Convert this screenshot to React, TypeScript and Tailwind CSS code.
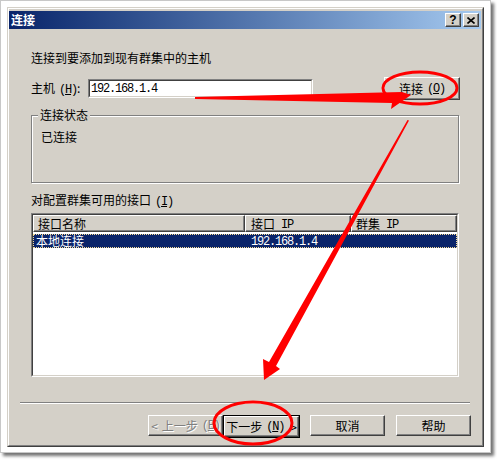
import React from 'react';

const cjk = "font-['Noto_Sans_CJK_SC',sans-serif]";

const M: React.FC<{ children: React.ReactNode; u?: boolean }> = ({ children, u }) => (
  <span className={`font-['Liberation_Mono',monospace] tracking-[-1.2px] ${u ? 'underline underline-offset-1' : ''}`}>
    {children}
  </span>
);

const Key: React.FC<{ k: string }> = ({ k }) => (
  <span className="font-['Liberation_Mono',monospace] tracking-[-1.2px] ml-[4px]">
    (<span className="underline underline-offset-1">{k}</span>)
  </span>
);

const raised =
  'border border-t-white border-l-white border-r-[#404040] border-b-[#404040] shadow-[inset_-1px_-1px_0_#808080]';

const Button: React.FC<{ children: React.ReactNode; className?: string; disabled?: boolean }> = ({
  children,
  className = '',
  disabled,
}) => (
  <div
    className={`h-[21px] w-[75px] flex items-center justify-center bg-[#d4d0c8] ${raised} ${
      disabled ? 'text-[#808080] [text-shadow:1px_1px_0_#fff]' : 'text-black'
    } ${className}`}
  >
    {children}
  </div>
);

const HeaderCell: React.FC<{ w: string; pl: string; children: React.ReactNode }> = ({ w, pl, children }) => (
  <div className={`${w} ${pl} h-[17px] flex items-center bg-[#d4d0c8] ${raised}`}>{children}</div>
);

export default function App() {
  return (
    <div className={`relative w-[497px] h-[460px] bg-white ${cjk} text-[12px] leading-[12px] text-black`}>
      {/* screenshot frame */}
      <div className="w-[491px] h-[453px] bg-white border border-[#c8c8c8] shadow-[3px_3px_3px_rgba(0,0,0,0.55)] p-[6px]">
        {/* dialog */}
        <div className="w-[477px] h-[440px] bg-[#d4d0c8] border border-t-[#d4d0c8] border-l-[#d4d0c8] border-r-[#404040] border-b-[#404040]">
          <div className="h-full border border-t-white border-l-white border-r-[#808080] border-b-[#808080] pt-[2px] pr-[1px]">
            {/* title bar */}
            <div className="h-[18px] flex items-center justify-between bg-gradient-to-r from-[#0a246a] to-[#a6caf0] pl-[2px] pr-[2px]">
              <span className="text-white font-bold text-[12px]">连接</span>
              <div className="flex gap-[2px]">
                <div className={`w-[16px] h-[14px] bg-[#d4d0c8] ${raised} flex items-center justify-center font-['Liberation_Sans',sans-serif] font-bold text-[12px] leading-none`}>
                  ?
                </div>
                <div className={`w-[16px] h-[14px] bg-[#d4d0c8] ${raised} flex items-center justify-center`}>
                  <svg width="8" height="7" viewBox="0 0 8 7">
                    <path d="M0.5 0.5 L7.5 6.5 M7.5 0.5 L0.5 6.5" stroke="#000" strokeWidth="1.6" />
                  </svg>
                </div>
              </div>
            </div>

            {/* body */}
            <div className="pl-[22px]">
              <div className="mt-[23px] h-[12px]">连接到要添加到现有群集中的主机</div>

              <div className="mt-[13px] h-[23px] flex items-center">
                <div className="w-[57px]">
                  主机<Key k="H" />:
                </div>
                <div className="w-[225px] h-[19px] bg-white border border-t-[#808080] border-l-[#808080] border-r-white border-b-white">
                  <div className="h-full border border-t-[#404040] border-l-[#404040] border-r-[#d4d0c8] border-b-[#d4d0c8] flex items-center pl-[1px]">
                    <M>192.168.1.4</M>
                  </div>
                </div>
                <Button className="ml-[71px] h-[23px] w-[76px]">
                  连接<Key k="O" />
                </Button>
              </div>

              {/* group box */}
              <div className="relative mt-[15px] w-[428px] h-[68px] border border-[#808080] shadow-[inset_1px_1px_0_#fff,1px_1px_0_#fff] pl-[9px] pt-[15px]">
                <span className="absolute -top-[7px] left-[6px] bg-[#d4d0c8] px-[2px]">连接状态</span>
                <div>已连接</div>
              </div>

              <div className="mt-[11px] h-[12px]">
                对配置群集可用的接口<Key k="I" />
              </div>

              {/* list view */}
              <div className="mt-[7px] w-[428px] h-[164px] bg-white border border-t-[#808080] border-l-[#808080] border-r-white border-b-white">
                <div className="h-full border border-t-[#404040] border-l-[#404040] border-r-[#d4d0c8] border-b-[#d4d0c8]">
                  <div className="flex">
                    <HeaderCell w="w-[212px]" pl="pl-[4px]">接口名称</HeaderCell>
                    <HeaderCell w="w-[106px]" pl="pl-[5px]">
                      接口<span className="ml-[6px]"><M>IP</M></span>
                    </HeaderCell>
                    <HeaderCell w="w-[106px]" pl="pl-[4px]">
                      群集<span className="ml-[6px]"><M>IP</M></span>
                    </HeaderCell>
                  </div>
                  <div className="mt-[2px] h-[14px] flex items-center bg-[#0a246a] text-white border border-dotted border-[#f5db95]">
                    <div className="w-[211px] pl-[2px]">本地连接</div>
                    <div className="pl-[6px]">
                      <M>192.168.1.4</M>
                    </div>
                  </div>
                </div>
              </div>
            </div>

            {/* separator */}
            <div className="ml-[11px] mt-[25px] w-[450px] border-t border-t-[#808080] border-b border-b-white" />

            {/* wizard buttons */}
            <div className="mt-[11px] ml-[139px] flex">
              <Button disabled>
                &lt;<span className="ml-[4px]">上一步</span>
                <Key k="B" />
              </Button>
              <div className="border border-black">
                <Button className="h-[21px] w-[74px]">
                  下一步<Key k="N" />
                  <span className="ml-[6px]">&gt;</span>
                </Button>
              </div>
              <Button className="ml-[10px]">取消</Button>
              <Button className="ml-[11px]">帮助</Button>
            </div>
          </div>
        </div>
      </div>

      {/* red annotations */}
      <svg className="absolute inset-0 pointer-events-none" width="497" height="460" viewBox="0 0 497 460">
        <polygon points="195,97 402,92 411,95 391,109 392,103 195,99" fill="#ff0000" />
        <ellipse cx="420" cy="88" rx="37" ry="16" fill="none" stroke="#ff0000" strokeWidth="3" />
        <polygon points="407.5,120 269,362 263,359 264,380 280,369 276,366 409,120.5" fill="#ff0000" />
        <ellipse cx="253" cy="423" rx="39" ry="21" fill="none" stroke="#ff0000" strokeWidth="3" />
      </svg>
    </div>
  );
}
